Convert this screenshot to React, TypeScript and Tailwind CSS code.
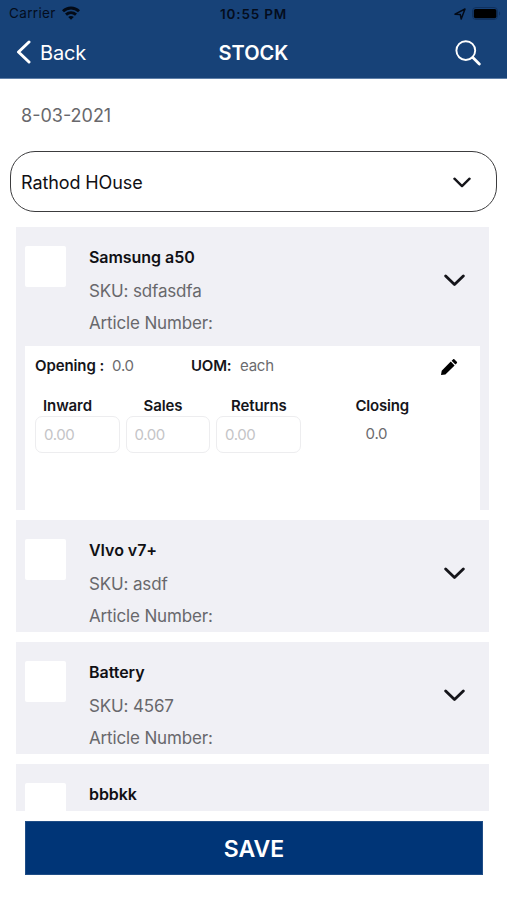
import React from 'react'

interface StockItem {
  name: string
  sku?: string
  expanded?: boolean
}

const items: StockItem[] = [
  { name: 'Samsung a50', sku: 'sdfasdfa', expanded: true },
  { name: 'VIvo v7+', sku: 'asdf' },
  { name: 'Battery', sku: '4567' },
  { name: 'bbbkk' },
]

const fields = [
  { label: 'Inward', className: 'pl-2' },
  { label: 'Sales', className: 'pl-[18px]' },
  { label: 'Returns', className: 'pl-[15px]' },
]

function Chevron({ className }: { className: string }) {
  return (
    <svg viewBox="0 0 20 12" fill="none" stroke="#15151a" strokeWidth="2.7" strokeLinecap="round" strokeLinejoin="round" className={className}>
      <path d="M1.6 1.8 10 9.9 18.4 1.8" />
    </svg>
  )
}

function StatusBar() {
  return (
    <div className="grid h-[27px] grid-cols-[1fr_auto_1fr] items-center px-[9px] text-[13.5px] text-[#040d1d]">
      <div className="flex items-center gap-[6px]">
        <span className="tracking-[0.35px]">Carrier</span>
        <svg viewBox="0 0 18 14" className="-mt-0.5 h-[14px] w-[18px]" fill="none" stroke="#030a16" strokeWidth="2.9">
          <path d="M1 5.2C5.6.9 12.4.9 17 5.2" />
          <path d="M4 8.7c3-2.7 7-2.7 10 0" />
          <path d="M9 13.8 6.2 11.1c1.6-1.4 4-1.4 5.6 0z" fill="#030a16" stroke="none" />
        </svg>
      </div>
      <span className="pt-px font-semibold tracking-[0.8px]">10:55 PM</span>
      <div className="flex items-center justify-end gap-[6px]">
        <svg viewBox="0 0 12 12" className="h-3 w-3" fill="none" stroke="#030a16" strokeWidth="1.5" strokeLinejoin="round">
          <path d="M1 6.2 11 1 7.2 11 6.3 6.6z" />
        </svg>
        <svg viewBox="0 0 29 13" className="-mr-[3px] h-[13px] w-[29px]">
          <rect x="0.5" y="0.5" width="25" height="12" rx="3.5" fill="none" stroke="#10315f" />
          <rect x="1.8" y="2" width="22.6" height="9.2" rx="1.8" fill="#000" />
          <path d="M27 4.5c1.6.6 1.6 3.4 0 4z" fill="#10315f" />
        </svg>
      </div>
    </div>
  )
}

function StockDetails() {
  return (
    <div className="mx-[9px] h-[164px] bg-white px-2.5 pt-2.5">
      <div className="flex h-5 items-center text-[15px]">
        <span className="w-[77px] font-semibold tracking-[-0.1px] text-[#15151a]">Opening :</span>
        <span className="w-[79px] tracking-[-0.2px] text-[#6b6b6e]">0.0</span>
        <span className="w-[49px] font-semibold tracking-[-0.2px] text-[#15151a]">UOM:</span>
        <span className="flex-1 tracking-[-0.25px] text-[#6b6b6e]">each</span>
        <svg viewBox="0 0 18 18" className="mt-px mr-[12px] h-[18px] w-[18px]" fill="#000">
          <path d="M1 17l.7-4.3L10.8 3.6l3.8 3.8-9.2 9zM16.8 5.2c.5-.5.5-1 0-1.5L14.5 1.4c-.5-.5-1-.5-1.5 0l-1.4 1.4 3.8 3.8z" />
        </svg>
      </div>
      <div className="mt-5 flex">
        {fields.map(field => (
          <div key={field.label} className="mr-1.5 w-[84.5px]">
            <div className={`h-5 text-[15px] leading-5 font-semibold tracking-[-0.1px] text-[#15151a] ${field.className}`}>{field.label}</div>
            <input
              placeholder="0.00"
              className="block h-[37px] w-full rounded-[7px] border border-[#ededef] px-2 text-[15px] tracking-[-0.4px] placeholder:text-[#c4c4c7]"
            />
          </div>
        ))}
        <div className="ml-[49px] text-[15px] leading-5">
          <div className="font-semibold tracking-[-0.2px] text-[#15151a]">Closing</div>
          <div className="mt-2 pl-2.5 tracking-[-0.2px] text-[#6b6b6e]">0.0</div>
        </div>
      </div>
    </div>
  )
}

function StockCard({ item }: { item: StockItem }) {
  return (
    <div className="shrink-0 bg-[#f0f0f5]">
      <div className={item.expanded ? 'flex h-[119px]' : 'flex h-28'}>
        <div className="mt-[19px] ml-[9px] h-[41px] w-[41px] rounded-[2px] bg-white" />
        <div className="ml-[23px] flex-1 pt-5 text-[17px] tracking-[-0.15px] text-[#68686c]">
          <div className="text-[16px] leading-5 font-semibold tracking-[-0.05px] text-[#101014]">{item.name}</div>
          {item.sku && (
            <>
              <div className="mt-3.5 leading-5">SKU: {item.sku}</div>
              <div className="mt-3 leading-5">Article Number:</div>
            </>
          )}
        </div>
        {item.sku && <Chevron className="mt-[47px] mr-6 h-[13px] w-[21px]" />}
      </div>
      {item.expanded && <StockDetails />}
    </div>
  )
}

export default function App() {
  return (
    <div className="flex h-[900px] w-[507px] flex-col overflow-hidden bg-white font-['Inter','Liberation_Sans',sans-serif]">
      <header className="h-[79px] shrink-0 border-b border-[#5f7fa8] bg-[#174278]">
        <StatusBar />
        <div className="grid h-[51px] grid-cols-[1fr_auto_1fr] items-center text-[20px] text-white">
          <div className="flex items-center gap-[9px] pl-4">
            <svg viewBox="0 0 15 24" className="-mt-px h-6 w-[15px]" fill="none" stroke="#fff" strokeWidth="3" strokeLinecap="round" strokeLinejoin="round">
              <path d="M13 2 2.5 12 13 22" />
            </svg>
            <span className="tracking-[-0.2px]">Back</span>
          </div>
          <h1 className="font-semibold">STOCK</h1>
          <div className="flex justify-end pr-[26px]">
            <svg viewBox="0 0 26 26" className="h-[26px] w-[26px]" fill="none" stroke="#fff" strokeLinecap="round">
              <circle cx="10.8" cy="10.6" r="9.4" strokeWidth="1.9" />
              <path d="M17.8 17.6 24.3 24" strokeWidth="2.8" />
            </svg>
          </div>
        </div>
      </header>

      <div className="mt-[25px] shrink-0 pl-[21px] text-[18px] leading-6 text-[#68686c]">8-03-2021</div>

      <button className="mx-2.5 mt-[23px] flex h-[61px] shrink-0 items-center justify-between rounded-[25px] border-[1.5px] border-[#3c3c3e] pt-0.5 pr-[25px] pl-[10px] text-[18px] text-[#101014]">
        <span className="tracking-[-0.1px]">Rathod HOuse</span>
        <Chevron className="h-[11px] w-[18px]" />
      </button>

      <main className="mr-[18px] mt-[15px] ml-4 flex h-[584px] shrink-0 flex-col gap-2.5 overflow-hidden">
        {items.map(item => (
          <StockCard key={item.name} item={item} />
        ))}
      </main>

      <button className="mt-2.5 mr-6 ml-[25px] h-[54px] shrink-0 border border-[#1f4d86] bg-[#003577] pt-[3px] text-[23px] font-semibold text-white">
        SAVE
      </button>
    </div>
  )
}
